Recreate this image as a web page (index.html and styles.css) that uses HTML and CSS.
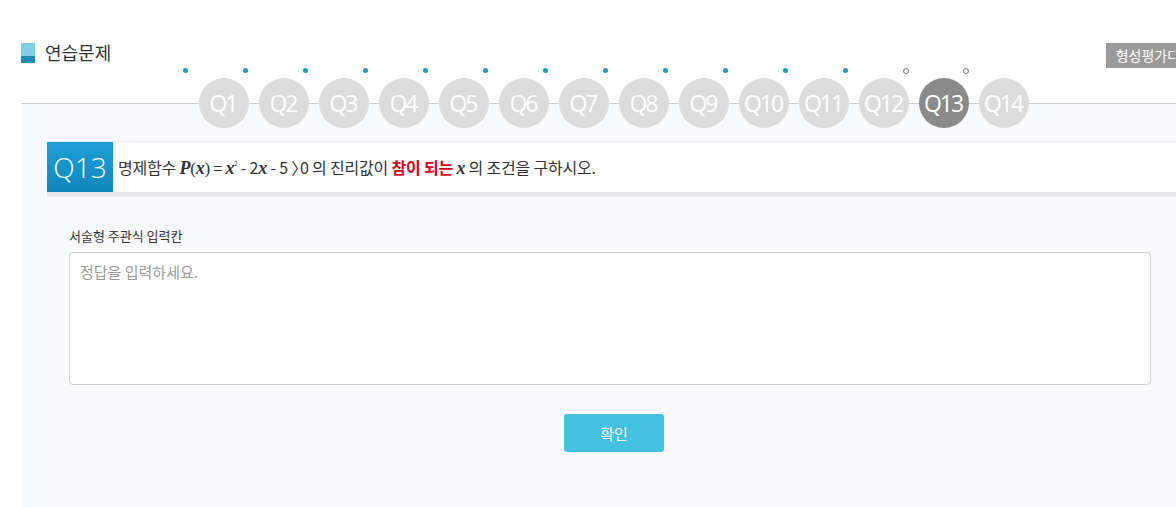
FILE: index.html
```html
<!DOCTYPE html>
<html>
<head>
    <title>연습문제</title>
    <link rel="stylesheet" href="styles.css">
</head>
<body>
    <div class="page">
        <div class="head">
            <h2 class="title"><span class="title-icon"></span>연습문제</h2>
            <span class="badge">형성평가다음</span>
        </div>

        <ol class="steps">
            <li class="step done"><span class="dot"></span>Q1</li>
            <li class="step done"><span class="dot"></span>Q2</li>
            <li class="step done"><span class="dot"></span>Q3</li>
            <li class="step done"><span class="dot"></span>Q4</li>
            <li class="step done"><span class="dot"></span>Q5</li>
            <li class="step done"><span class="dot"></span>Q6</li>
            <li class="step done"><span class="dot"></span>Q7</li>
            <li class="step done"><span class="dot"></span>Q8</li>
            <li class="step done"><span class="dot"></span>Q9</li>
            <li class="step done"><span class="dot"></span>Q10</li>
            <li class="step done"><span class="dot"></span>Q11</li>
            <li class="step done"><span class="dot"></span>Q12</li>
            <li class="step current"><span class="dot"></span>Q13</li>
            <li class="step"><span class="dot"></span>Q14</li>
        </ol>

        <div class="panel">
            <div class="question">
                <span class="qno">Q13</span>
                <p class="qtext">명제함수 <span class="math"><i>P</i><span class="paren">(</span><i>x</i><span class="paren">)</span> = <i>x</i><sup>2</sup></span> - 2<span class="math"><i>x</i></span> - 5 <span class="gt">〉</span>0 의 진리값이 <strong>참이 되는</strong> <span class="math"><i>x</i></span> 의 조건을 구하시오.</p>
            </div>

            <div class="answer">
                <label for="answer">서술형 주관식 입력칸</label>
                <textarea id="answer" placeholder="정답을 입력하세요."></textarea>
                <div class="actions">
                    <button>확인</button>
                </div>
            </div>
        </div>
    </div>
</body>
</html>
```

FILE: styles.css
```css
html, body {
    margin: 0;
    overflow: hidden;
}
body {
    font-family: "Open Sans", "Noto Sans CJK KR", sans-serif;
    color: #333;
    background: #fff;
}
.page {
    margin-left: 21px;
    width: 1182px;
}
.head {
    display: flex;
    align-items: flex-start;
    padding-top: 43px;
    height: 25px;
}
.title {
    display: flex;
    align-items: flex-start;
    margin: 0;
    font-family: "Noto Sans CJK KR", sans-serif;
    font-size: 18px;
    font-weight: normal;
    line-height: 19px;
    color: #333;
}
.title-icon {
    width: 14px;
    height: 20px;
    margin-right: 10px;
    background: linear-gradient(#80cde8 0, #80cde8 13px, #1a8ab3 13px);
}
.badge {
    margin-left: auto;
    height: 25px;
    padding: 0 10px;
    background: #9a9a9a;
    color: #fff;
    font-family: "Noto Sans CJK KR", sans-serif;
    font-size: 14px;
    line-height: 25px;
    white-space: nowrap;
}
.steps {
    position: relative;
    z-index: 1;
    display: flex;
    list-style: none;
    margin: 10px 0 -25px;
    padding: 0 0 0 173px;
    background: linear-gradient(#cfcfcf, #cfcfcf) no-repeat 0 25px / 100% 1px;
}
.step {
    position: relative;
    width: 50px;
    height: 50px;
    margin: 0 5px;
    border-radius: 50%;
    background: #dcdcdc;
    color: #fff;
    font-size: 23px;
    letter-spacing: -2px;
    line-height: 50px;
    text-align: center;
    text-indent: -2px;
}
.step.current {
    background: #8a8a8a;
}
.dot {
    position: absolute;
    left: -16px;
    top: -10px;
    width: 5px;
    height: 5px;
    border-radius: 50%;
    background: #1b98c4;
}
.step.current .dot,
.step:not(.done) .dot {
    width: 4px;
    height: 4px;
    border: 1px solid #7a7a7a;
    background: #fff;
}
.panel {
    background: #f9fafc;
    padding: 38px 0 60px 26px;
}
.question {
    display: flex;
    align-items: center;
    height: 50px;
    background: #fff;
    border-top: 1px solid #eceef1;
    border-bottom: 5px solid #e7e8eb;
}
.qno {
    width: 66px;
    height: 50px;
    background: linear-gradient(#1ea0d7, #0f86bb);
    color: #fff;
    font-size: 28px;
    font-weight: 300;
    line-height: 50px;
    text-align: center;
}
.qtext {
    margin: 0 0 0 5px;
    font-family: "Noto Sans CJK KR", sans-serif;
    font-size: 16px;
    letter-spacing: -0.2px;
    color: #333;
}
.math i {
    font-family: "Liberation Serif", serif;
    font-weight: bold;
    font-size: 18px;
}
.math .paren {
    font-family: "Liberation Serif", serif;
    font-size: 17px;
}
.math sup {
    font-size: 6px;
    vertical-align: 8px;
}
.gt {
    margin-right: -7px;
}
.qtext strong {
    color: #e0001b;
}
.answer {
    padding: 30px 0 0 22px;
}
.answer label {
    display: block;
    font-family: "Noto Sans CJK KR", sans-serif;
    font-size: 13px;
    line-height: 18px;
    color: #333;
    margin-bottom: 7px;
}
.answer textarea {
    display: block;
    box-sizing: border-box;
    width: 1082px;
    height: 133px;
    padding: 8px 10px;
    border: 1px solid #cfcfcf;
    border-radius: 4px;
    background: #fff;
    font-family: "Noto Sans CJK KR", sans-serif;
    font-size: 15px;
    resize: none;
}
.answer textarea::placeholder {
    color: #999;
}
.actions {
    width: 1082px;
    display: flex;
    justify-content: center;
    margin-top: 29px;
}
.actions button {
    width: 100px;
    height: 38px;
    margin-left: 8px;
    border: none;
    border-radius: 3px;
    background: #45c0e0;
    color: #fff;
    font-family: "Noto Sans CJK KR", sans-serif;
    font-size: 15px;
    cursor: pointer;
}
```
